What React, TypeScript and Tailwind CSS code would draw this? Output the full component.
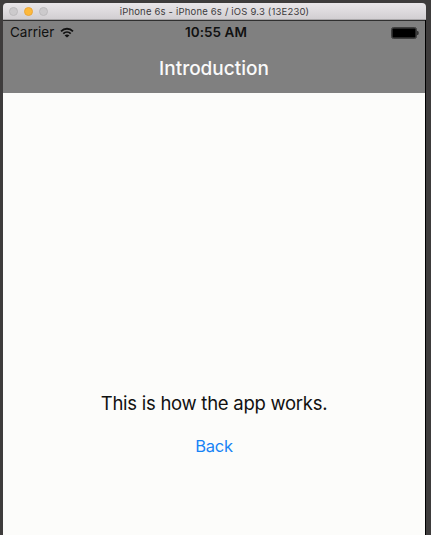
import React from "react";

function WifiIcon() {
  return (
    <svg width="14" height="11" viewBox="0 0 15 11" fill="none" stroke="#111" strokeWidth="2">
      <path d="M1.1 4.2C4.7 0.6 10.3 0.6 13.9 4.2" />
      <path d="M3.5 6.7C5.8 4.5 9.2 4.5 11.5 6.7" />
      <path d="M7.5 10.8L4.9 8.6C6.4 7.2 8.6 7.2 10.1 8.6Z" fill="#111" stroke="none" />
    </svg>
  );
}

function BatteryIcon() {
  return (
    <svg width="28" height="12" viewBox="0 0 28 12">
      <rect x="0.5" y="0.5" width="25" height="11" rx="2" fill="#505050" stroke="#404040" />
      <rect x="1.5" y="1.5" width="23" height="9" rx="0.8" fill="#000" />
      <path d="M26.4 4C27.6 4.4 27.6 7.6 26.4 8Z" fill="#202020" stroke="#303030" strokeWidth="0.7" />
    </svg>
  );
}

function TitleBar() {
  return (
    <div className="grid h-[17px] shrink-0 grid-cols-[1fr_auto_1fr] items-center rounded-t-[4px] border-b border-[#a9a7a9] bg-linear-to-b from-[#e9e6e9] to-[#d2cfd2]">
      <div className="flex gap-[6px] pl-[6px]">
        <span className="size-[9px] rounded-full border border-[#bdbbbd] bg-[#cccacc]" />
        <span className="size-[9px] rounded-full border border-[#eba63a] bg-[#fdb93b]" />
        <span className="size-[9px] rounded-full border border-[#bdbbbd] bg-[#cccacc]" />
      </div>
      <span className="pt-[2px] text-[9.5px] leading-none tracking-[0.18px] whitespace-pre text-[#3d3b3d]">
        iPhone 6s - iPhone 6s / iOS 9.3 (13E230)
      </span>
    </div>
  );
}

export default function App() {
  return (
    <div className="h-[535px] w-[431px] overflow-hidden bg-[#3e3c3c] pt-[3px] pr-[5px] pl-[3px] font-['Inter','Liberation_Sans',sans-serif]">
      <div className="flex h-full flex-col">
        <TitleBar />
        <div className="flex flex-1 flex-col border-r border-black bg-[#fcfcfa]">
          <header className="h-[73px] border-t border-[#303030] bg-[#808080]">
            <div className="grid h-[23px] grid-cols-3 items-center pr-[6px] pl-[7px] text-[#111]">
              <div className="flex items-center gap-[6px]">
                <span className="text-[13.5px] leading-none">Carrier</span>
                <WifiIcon />
              </div>
              <span className="pl-[3px] text-center text-[13.5px] leading-none font-semibold tracking-[0.05px] whitespace-nowrap">10:55 AM</span>
              <div className="flex justify-end">
                <BatteryIcon />
              </div>
            </div>
            <h1 className="pt-[13px] text-center text-[19px] leading-6 font-medium text-[#fafafa]">Introduction</h1>
          </header>
          <main className="flex flex-col items-center pt-[298px]">
            <p className="text-[18.5px] leading-6 tracking-[-0.27px] whitespace-nowrap text-[#111]">This is how the app works.</p>
            <button className="mt-[19px] text-[16.5px] leading-6 tracking-[-0.2px] text-[#1683f5]">Back</button>
          </main>
        </div>
      </div>
    </div>
  );
}
